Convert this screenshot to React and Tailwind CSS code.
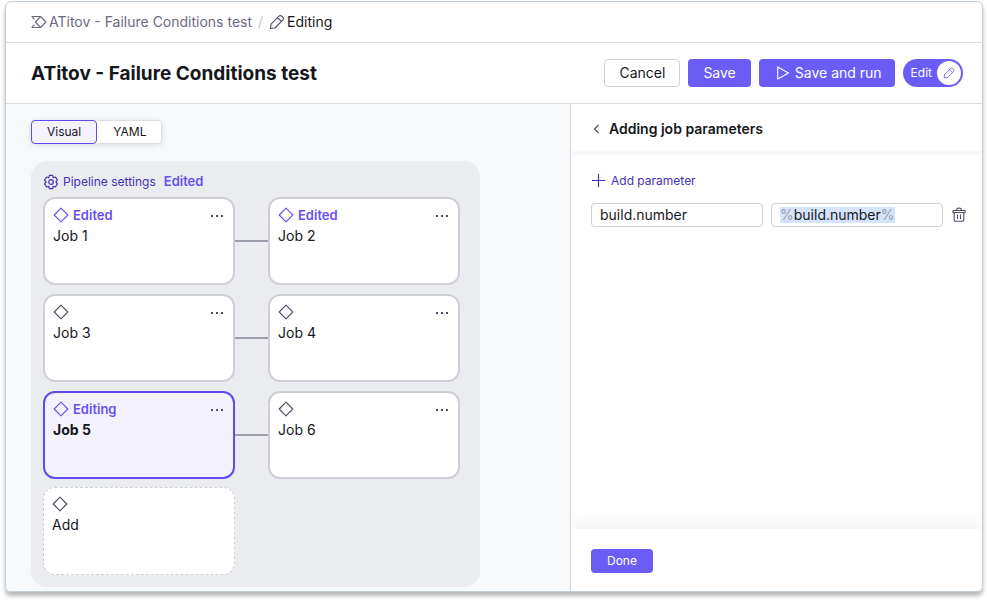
import React, { useState } from "react";

const PipelineIcon = () => (
  <svg className="w-4 h-4" viewBox="0 0 16 16" fill="none" stroke="currentColor" strokeWidth={1.2} strokeLinejoin="round">
    <path d="M0.500 2.500h9.100L14.800 8l-5.200 5.500H0.500M9.400 2.700L4.400 8l5 5.300M1.400 3.200l2 2.100M1.400 12.800l2-2.100" />
  </svg>
);

const PencilIcon = ({ className }) => (
  <svg className={className} viewBox="0 0 16 16" fill="none" stroke="currentColor" strokeWidth={1.1} strokeLinejoin="round">
    <path d="M1.500 14.500l.5-4.400 7.900-7.900a2 2 0 0 1 2.900 0l1 1a2 2 0 0 1 0 2.900l-7.900 7.900-4.400.5zM8.500 3.600l3.900 3.900" />
  </svg>
);

const DiamondIcon = () => (
  <svg className="w-4 h-4" viewBox="0 0 16 16" fill="none" stroke="currentColor" strokeWidth={1.1} strokeLinejoin="round">
    <path d="M8 1.2L14.8 8 8 14.8 1.2 8z" />
  </svg>
);

const GearIcon = () => (
  <svg className="w-4 h-4" viewBox="0 0 16 16" fill="none" stroke="currentColor" strokeWidth={1.2} strokeLinejoin="round">
    <path d="M6.400 1.400h3.200l.6 2.200 2.200-.6 2.100 3.100L12.900 8l1.600 1.900-2.100 3.100-2.200-.6-.6 2.200H6.400l-.6-2.200-2.200.6-2.100-3.100L3.100 8 1.500 6.100 3.600 3l2.200.6z" />
    <circle cx="8" cy="8" r="2.300" />
  </svg>
);

const PlayIcon = () => (
  <svg className="w-4 h-4" viewBox="0 0 16 16" fill="none" stroke="currentColor" strokeWidth={1.1} strokeLinejoin="round">
    <path d="M2.700 2v12L13.500 8z" />
  </svg>
);

const TrashIcon = () => (
  <svg className="w-4 h-4" viewBox="0 0 16 16" fill="none" stroke="currentColor" strokeWidth={1.1} strokeLinejoin="round">
    <path d="M2 5.500V3.500h12v2zM5.500 3.300c0-3 5-3 5 0M3.200 5.500v7.500c0 .8.5 1.300 1.300 1.300h7c.8 0 1.300-.5 1.300-1.300V5.500M6.500 7.500v4.500M9.500 7.500v4.500" />
  </svg>
);

const rows = [
  [
    { name: "Job 1", status: "Edited" },
    { name: "Job 2", status: "Edited" },
  ],
  [{ name: "Job 3" }, { name: "Job 4" }],
  [{ name: "Job 5", status: "Editing", active: true }, { name: "Job 6" }],
];

const JobCard = ({ job }) => (
  <div
    className={`w-48 h-22 rounded-xl border-2 p-2 ${
      job.active ? "border-[#5f4bf0] bg-[#f3f2fe]" : "border-[#cfcfd6] bg-white"
    }`}
  >
    <div className="flex items-center h-4">
      <span className={job.status ? "text-[#6550f0]" : "text-[#4d4d66]"}>
        <DiamondIcon />
      </span>
      {job.status && (
        <span className="ml-1 text-[13px] leading-4 font-semibold text-[#6550f0]">{job.status}</span>
      )}
      <button aria-label={`${job.name} actions`} className="ml-auto text-[#4d4d66]">
        <svg className="w-4 h-4" viewBox="0 0 16 16" fill="currentColor">
          <path d="M2 8h2v2H2zM7 8h2v2H7zM12 8h2v2h-2z" />
        </svg>
      </button>
    </div>
    <div className={`mt-[3px] text-sm leading-5 ${job.active ? "font-bold" : ""}`}>
      {job.name}
    </div>
  </div>
);

export default function App() {
  const [tab, setTab] = useState("visual");
  const [name, setName] = useState("build.number");
  const [value, setValue] = useState("build.number");

  const tabClass = (id) =>
    tab === id
      ? "border-[#5f4bf0] bg-[#f3f2fe] rounded-sm"
      : "border-[#dcdde2] border-l-transparent rounded-r-sm";

  return (
    <div className="min-h-screen flex flex-col bg-white pt-px pl-[5px] pr-1 pb-2 font-['Inter',sans-serif] text-[#16171c]">
      <div className="flex-1 flex flex-col rounded-md border border-[#c3d0da] shadow-[0_4px_4px_#00000048] overflow-hidden">
        {/* Breadcrumbs */}
        <nav className="flex items-center h-[41px] px-[25px] border-b border-[#dcdde2] text-sm">
          <a href="#" className="flex items-center gap-0.5 text-[#6b6b80]">
            <PipelineIcon />
            ATitov - Failure Conditions test
          </a>
          <span className="mx-1.5 text-[#c8c8d0]">/</span>
          <span className="flex items-center gap-0.5">
            <PencilIcon className="w-4 h-4 text-[#4d4d66]" />
            Editing
          </span>
        </nav>

        {/* Title and actions */}
        <header className="flex items-center h-[61px] pl-[25px] pr-[19px] gap-2 border-b border-[#dcdde2]">
          <h1 className="mr-auto pt-0.5 text-[19px] font-bold">ATitov - Failure Conditions test</h1>
          <button className="h-7 px-3.5 rounded border border-[#cfcfd6] text-sm">Cancel</button>
          <button className="h-7 px-[15px] rounded bg-[#6b5cf6] text-sm text-white">Save</button>
          <button className="flex items-center gap-1 h-7 pl-4 pr-[13px] rounded bg-[#6b5cf6] text-sm text-white">
            <PlayIcon />
            Save and run
          </button>
          <button className="flex items-center gap-[5px] h-7 pl-2 pr-0.5 rounded-full bg-[#6b5cf6] text-xs text-white">
            Edit
            <span className="flex items-center justify-center w-6 h-6 rounded-full bg-white text-[#6550ee]">
              <PencilIcon className="w-3 h-3" />
            </span>
          </button>
        </header>

        <div className="flex-1 flex">
          {/* Pipeline canvas */}
          <main className="flex-1 pl-[25px] pt-4 pb-1 bg-[#f7f8fa]">
            <div className="flex w-fit h-6 rounded-sm bg-white shadow-[0_1px_5px_#00000020] text-xs">
              <button onClick={() => setTab("visual")} className={`px-[15px] border ${tabClass("visual")}`}>
                Visual
              </button>
              <button onClick={() => setTab("yaml")} className={`px-[15px] border ${tabClass("yaml")}`}>
                YAML
              </button>
            </div>

            <section className="mt-[17px] w-fit rounded-2xl bg-[#ebecf0] pl-3 pr-5 pb-3">
              <div className="flex items-center h-9 pt-[5px]">
                <button className="flex items-center gap-1 text-xs text-[#4430b5]">
                  <GearIcon />
                  Pipeline settings
                </button>
                <span className="ml-2 text-[13px] font-semibold text-[#6550f0]">Edited</span>
              </div>
              <div className="flex flex-col gap-[9px]">
                {rows.map(([first, second]) => (
                  <div key={first.name} className="flex items-center">
                    <JobCard job={first} />
                    <div className="w-[33px] h-0.5 bg-[#9d9dab]" />
                    <JobCard job={second} />
                  </div>
                ))}
              </div>
              <button className="flex flex-col items-start mt-2 w-48 h-22 rounded-xl border border-dashed border-[#cfcfd6] bg-white p-2 text-sm">
                <span className="text-[#4d4d66]">
                  <DiamondIcon />
                </span>
                <span className="mt-[3px]">Add</span>
              </button>
            </section>
          </main>

          {/* Job parameters */}
          <aside className="flex flex-col w-[412px] border-l border-[#d8d9df] overflow-hidden">
            <div className="flex items-center gap-1 h-[51px] pt-0.5 pl-[18px] border-b-4 border-[#f7f8fa]">
              <button aria-label="Back" className="text-[#4d4d66]">
                <svg className="w-4 h-4" viewBox="0 0 16 16" fill="none" stroke="currentColor" strokeWidth={1.2}>
                  <path d="M9.500 4l-4 4 4 4" />
                </svg>
              </button>
              <h2 className="text-sm font-semibold">Adding job parameters</h2>
            </div>
            <div className="flex-1 pl-5 pr-[15px] pt-4">
              <button className="flex items-center gap-1 text-xs leading-5 text-[#4430b5]">
                <svg className="w-4 h-4" viewBox="0 0 16 16" fill="none" stroke="currentColor" strokeWidth={1.2}>
                  <path d="M7.500 1v13M1 7.500h13" />
                </svg>
                Add parameter
              </button>
              <div className="flex items-center gap-2 mt-3">
                <input
                  aria-label="Parameter name"
                  value={name}
                  onChange={(e) => setName(e.target.value)}
                  className="flex-1 min-w-0 h-6 px-2 pb-px rounded border border-[#cfcfd6] text-sm"
                />
                <label className="flex flex-1 items-center min-w-0 h-6 px-2 rounded border border-[#cfcfd6] text-sm leading-4 text-[#9a9aaa]">
                  <span className="bg-[#d5e4fc]">%</span>
                  <input
                    aria-label="Parameter value"
                    value={value}
                    onChange={(e) => setValue(e.target.value)}
                    className="field-sizing-content bg-[#d5e4fc] text-[#16171c]"
                  />
                  <span className="bg-[#d5e4fc]">%</span>
                </label>
                <button aria-label="Delete parameter" className="text-[#4d4d66]">
                  <TrashIcon />
                </button>
              </div>
            </div>
            <footer className="flex items-center h-[62px] pt-0.5 px-5 shadow-[0_-4px_20px_#00000010]">
              <button className="h-6 px-4 rounded-sm bg-[#6b5cf6] text-xs text-white">Done</button>
            </footer>
          </aside>
        </div>
      </div>
    </div>
  );
}
